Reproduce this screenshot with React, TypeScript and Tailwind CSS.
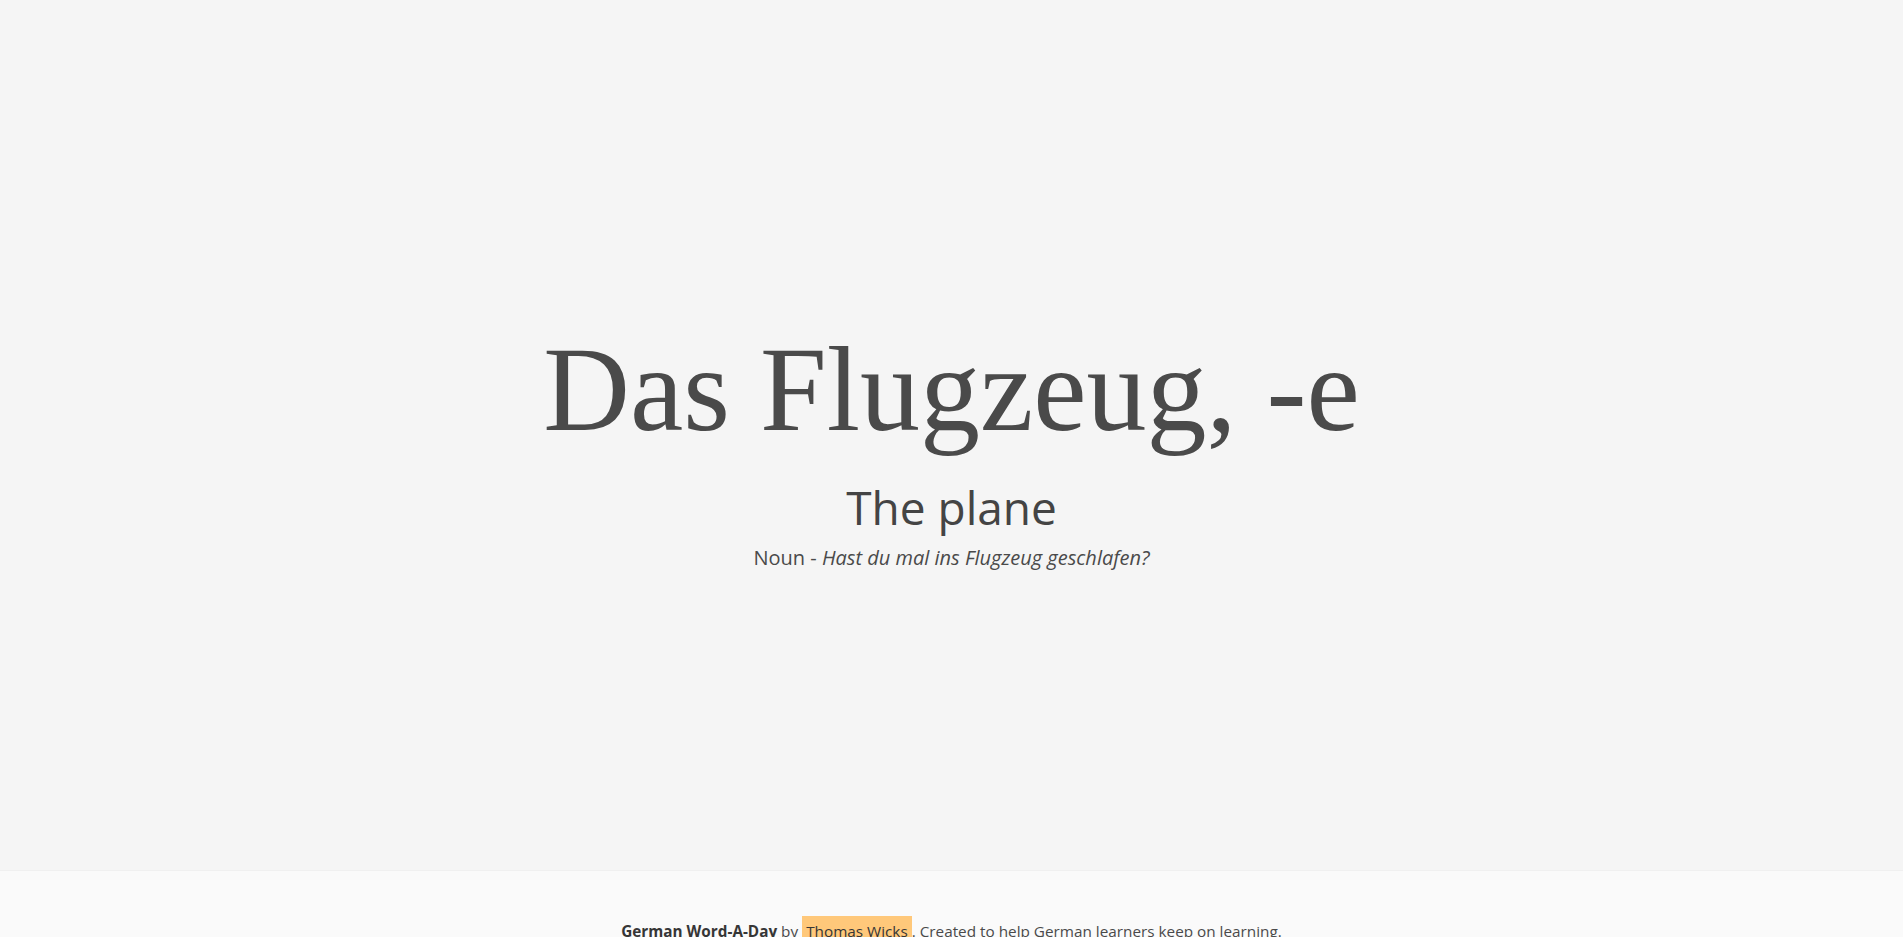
const App = () => {
  return (
    <div className="min-h-screen bg-[#f5f5f5] font-['Open_Sans','Noto_Sans',sans-serif] text-[#4a4a4a]">
      <main className="flex h-[870px] flex-col items-center justify-center pt-[30px]">
        <h1 className="font-['Liberation_Serif',serif] text-[120px] leading-none text-[#4a4a4a]">
          Das Flugzeug, -e
        </h1>
        <h2 className="mt-[34px] text-[46px] leading-none text-[#444]">The plane</h2>
        <p className="mt-[15px] text-[20px] leading-tight text-[#4a4a4a]">
          Noun - <em>Hast du mal ins Flugzeug geschlafen?</em>
        </p>
      </main>
      <footer className="border-t border-[#f0f0f0] bg-[#fafafa] px-6 pt-[48px] pb-12 text-center text-[15.3px] leading-6 text-[#4a4a4a]">
        <p>
          <strong className="text-[#363636]">German Word-A-Day</strong> by{" "}
          <a href="#" className="bg-[#ffc87a] px-[4px] py-[5px] text-[#363636]">
            Thomas Wicks
          </a>
          . Created to help German learners keep on learning.
        </p>
      </footer>
    </div>
  )
}

export default App
